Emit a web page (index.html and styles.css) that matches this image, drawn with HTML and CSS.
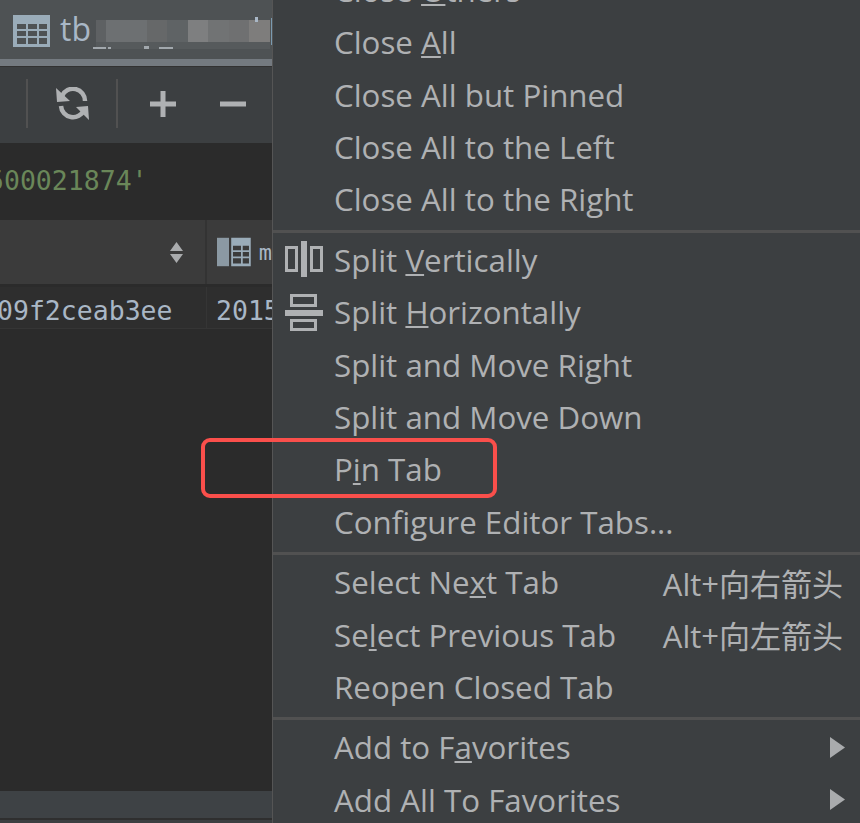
FILE: index.html
```html
<!DOCTYPE html>
<html lang="en">
<head>
<meta charset="utf-8">
<title>Pin Tab</title>
<link rel="stylesheet" href="styles.css">
</head>
<body>
<div class="screen">
  <section class="editor">
    <div class="tabbar">
      <svg class="tab-icon" width="37" height="32" viewBox="0 0 37 32"><path fill="#9aacb9" fill-rule="evenodd" d="M0 0h37v32H0zM4 9v5h9V9zM15 9v5h9V9zM26 9v5h8V9zM4 16v5h9v-5zM15 16v5h9v-5zM26 16v5h8v-5zM4 23v6h9v-6zM15 23v6h9v-6zM26 23v6h8v-6z"/></svg>
      <span class="tab-name">tb</span>
      <div class="blur">
        <div class="blur-top">
          <i class="b1"></i><i class="b2"></i><i class="b3"></i><i class="b4"></i><i class="b5"></i><i class="b6"></i><i class="b7"></i><i class="b8"></i>
        </div>
        <div class="blur-low">
          <i class="f1"></i><i class="f2"></i><i class="f3"></i><i class="f4"></i>
        </div>
      </div>
      <span class="tab-stick"></span>
      <span class="tab-cursor"></span>
    </div>
    <div class="tab-line"></div>
    <div class="toolbar">
      <span class="tool-sep"></span>
      <svg class="tool-refresh" width="34" height="34" viewBox="0 0 34 34"><path fill="none" stroke="#afb1b3" stroke-width="4.500" d="M6 9A12 12 0 0 1 29 14M5 19A12 12 0 0 0 28 23"/><path fill="#afb1b3" d="M0 1l1 14 13-1zM33 33l-1-14-12 1z"/></svg>
      <span class="tool-sep"></span>
      <svg class="tool-plus" width="26" height="26" viewBox="0 0 26 26"><path fill="#afb1b3" d="M10.500 0h5v10.500H26v5H15.500V26h-5V15.500H0v-5h10.500z"/></svg>
      <svg class="tool-minus" width="26" height="26" viewBox="0 0 26 26"><path fill="#afb1b3" d="M0 10.500h26v5H0z"/></svg>
    </div>
    <div class="query"><span class="query-text">500021874'</span></div>
    <div class="grid-head">
      <div class="head-cell">
        <svg width="13" height="21" viewBox="0 0 13 21"><path fill="#a9abad" d="M6.500 0L13 9H0zM0 12h13l-6.500 9z"/></svg>
      </div>
      <div class="head-cell-2">
        <svg width="38" height="32" viewBox="0 0 38 32"><path fill="#8b99a3" d="M0 0h13.500v32H0z"/><path fill="#9aacb9" fill-rule="evenodd" d="M16 0h22v32H16zM18 9v5h9V9zM29 9v5h7V9zM18 16v5h9v-5zM29 16v5h7v-5zM18 23v6h9v-6zM29 23v6h7v-6z"/></svg>
        <span class="head-name">m</span>
      </div>
    </div>
    <div class="grid-gap"></div>
    <div class="grid-row">
      <div class="cell-1">09f2ceab3ee</div>
      <div class="cell-2">2015</div>
    </div>
    <div class="grid-empty"></div>
    <div class="statusbar"></div>
    <div class="status-line"></div>
    <div class="status-end"></div>
  </section>

  <nav class="menu">
    <div class="item"><span class="label">Close <u>O</u>thers</span></div>
    <div class="item"><span class="label">Close <u>A</u>ll</span></div>
    <div class="item"><span class="label">Close All but Pinned</span></div>
    <div class="item"><span class="label">Close All to the Left</span></div>
    <div class="item"><span class="label">Close All to the Right</span></div>
    <div class="sep"></div>
    <div class="item">
      <svg class="item-icon" width="38" height="36" viewBox="0 0 38 36"><path fill="#afb1b3" fill-rule="evenodd" d="M16 0h6v36h-6zM0 5h13v26H0zM3 8v20h7V8zM25 5h13v26H25zM28 8v20h7V8z"/></svg>
      <span class="label">Split <u>V</u>ertically</span>
    </div>
    <div class="item">
      <svg class="item-icon" width="38" height="37" viewBox="0 0 38 37"><path fill="#afb1b3" fill-rule="evenodd" d="M0 16h38v6H0zM5 0h27v13H5zM8 3v7h21V3zM5 25h27v12H5zM8 28v6h21v-6z"/></svg>
      <span class="label">Split <u>H</u>orizontally</span>
    </div>
    <div class="item"><span class="label">Split and Move Right</span></div>
    <div class="item"><span class="label">Split and Move Down</span></div>
    <div class="item"><span class="label">P<u>i</u>n Tab</span></div>
    <div class="item"><span class="label">Configure Editor Tabs...</span></div>
    <div class="sep"></div>
    <div class="item"><span class="label">Select Ne<u>x</u>t Tab</span><span class="key">Alt+向右箭头</span></div>
    <div class="item"><span class="label">Se<u>l</u>ect Previous Tab</span><span class="key">Alt+向左箭头</span></div>
    <div class="item"><span class="label">Reopen Closed Tab</span></div>
    <div class="sep"></div>
    <div class="item"><span class="label">Add to F<u>a</u>vorites</span><svg class="arrow" width="15" height="21" viewBox="0 0 15 21"><path fill="#a9abad" d="M0 0l15 10.500L0 21z"/></svg></div>
    <div class="item"><span class="label">Add All To Favorites</span><svg class="arrow" width="15" height="21" viewBox="0 0 15 21"><path fill="#a9abad" d="M0 0l15 10.500L0 21z"/></svg></div>
  </nav>

  <div class="callout"></div>
</div>
</body>
</html>
```

FILE: styles.css
```css
html, body {
  margin: 0;
  padding: 0;
  background: #3c3f41;
}
.screen {
  position: relative;
  display: flex;
  width: 860px;
  height: 823px;
  overflow: hidden;
}
.editor {
  display: flex;
  flex-direction: column;
  width: 272px;
  flex: none;
  background: #2b2b2b;
}
.tabbar {
  position: relative;
  display: flex;
  align-items: flex-start;
  height: 59px;
  padding: 15px 0 0 13px;
  box-sizing: border-box;
  background: #4e5254;
  overflow: hidden;
}
.tab-icon { flex: none; }
.tab-name {
  margin: -8px 0 0 10px;
  font: 32px/44px "Open Sans", sans-serif;
  color: #a9b7c6;
}
.blur {
  display: flex;
  flex-direction: column;
  margin: 5px 0 0 5px;
}
.blur-top { display: flex; }
.blur-top i { display: block; width: 20.500px; height: 22px; }
.b1 { width: 10px !important; background: #5e6163; }
.b2 { width: 41px !important; background: #6d7072; }
.b3 { background: #666869; }
.b4 { background: #5f6365; }
.b5 { background: #7e7f80; }
.b6 { background: #717374; }
.b7 { background: #6f7071; }
.b8 { background: #7e7d7c; }
.blur-low {
  display: flex;
  align-items: flex-end;
  height: 7px;
  background: #565a5c;
}
.blur-low i { display: block; height: 2px; background: #a2a8ad; }
.f1 { width: 13px; margin-left: -3px; }
.f2 { width: 3px; margin-left: 2px; }
.f3 { width: 5px; height: 3px !important; margin-left: 33px; }
.f4 { width: 14px; margin-left: 10px; }
.tab-stick {
  position: absolute;
  left: 255px;
  top: 17px;
  width: 3px;
  height: 5px;
  background: #a9b7c6;
}
.tab-cursor {
  position: absolute;
  left: 271px;
  top: 18px;
  width: 1px;
  height: 27px;
  background: #7a9ab0;
}
.tab-line {
  height: 7px;
  background: #747a80;
  border-bottom: 1px solid #323232;
}
.toolbar {
  display: flex;
  align-items: center;
  height: 76px;
  padding-bottom: 3px;
  box-sizing: border-box;
  background: #3c3f41;
}
.tool-sep {
  width: 2px;
  height: 49px;
  flex: none;
  background: #515151;
}
.toolbar .tool-sep:first-child { margin-left: 26px; }
.tool-refresh { flex: none; margin: 1px 26px 0 28px; }
.tool-plus { flex: none; margin-left: 32px; }
.tool-minus { flex: none; margin-left: 44px; }
.query {
  height: 77px;
  background: #2b2b2b;
  overflow: hidden;
}
.query-text {
  display: block;
  margin: 22px 0 0 -12px;
  font: 26.500px/32px "DejaVu Sans Mono", monospace;
  color: #6a8759;
}
.grid-head {
  display: flex;
  height: 64px;
  background: #3b3b3b;
}
.head-cell {
  display: flex;
  align-items: center;
  justify-content: flex-end;
  width: 207px;
  padding-right: 22px;
  box-sizing: border-box;
  border-right: 2px solid #333;
  flex: none;
}
.head-cell-2 {
  display: flex;
  align-items: center;
  padding-left: 10px;
  overflow: hidden;
}
.head-name {
  margin-left: 8px;
  font: 22px "DejaVu Sans Mono", monospace;
  color: #a9b7c6;
}
.grid-gap { height: 3px; background: #2b2b2b; }
.grid-row {
  display: flex;
  height: 42px;
  box-sizing: border-box;
  border-bottom: 1px solid #353535;
  background: #2e2e2e;
  font: 26.500px/48px "DejaVu Sans Mono", monospace;
  color: #a9b7c6;
  overflow: hidden;
}
.cell-1 {
  width: 207px;
  flex: none;
  box-sizing: border-box;
  border-right: 1px solid #353535;
  text-indent: -3px;
}
.cell-2 { padding-left: 9px; white-space: nowrap; }
.grid-empty { flex: 1; background: #2b2b2b; }
.statusbar { height: 27px; background: #3e4245; }
.status-line { height: 2px; background: #2f2f2f; }
.status-end { height: 3px; background: #3c3f41; }

.menu {
  flex: 1;
  margin-top: -36.300px;
  border-left: 1px solid #555;
  background: #3c3f41;
  font: 31.300px "Open Sans", "Noto Sans CJK SC", sans-serif;
  color: #afb1b3;
}
.item {
  position: relative;
  display: flex;
  align-items: center;
  height: 52.400px;
  padding: 0 17px 0 61px;
}
.item u { text-underline-offset: 2px; text-decoration-thickness: 2px; }
.label { white-space: nowrap; }
.key { margin-left: auto; font-size: 31px; }
.arrow { margin-left: auto; margin-right: -2px; }
.item-icon { position: absolute; left: 12px; top: 7.500px; }
.sep {
  height: 3px;
  margin: 4px 0 1px;
  background: #515151;
}
.callout {
  position: absolute;
  left: 201px;
  top: 438px;
  width: 296px;
  height: 60px;
  box-sizing: border-box;
  border: 4px solid #fa4f4b;
  border-radius: 9px;
}
```
